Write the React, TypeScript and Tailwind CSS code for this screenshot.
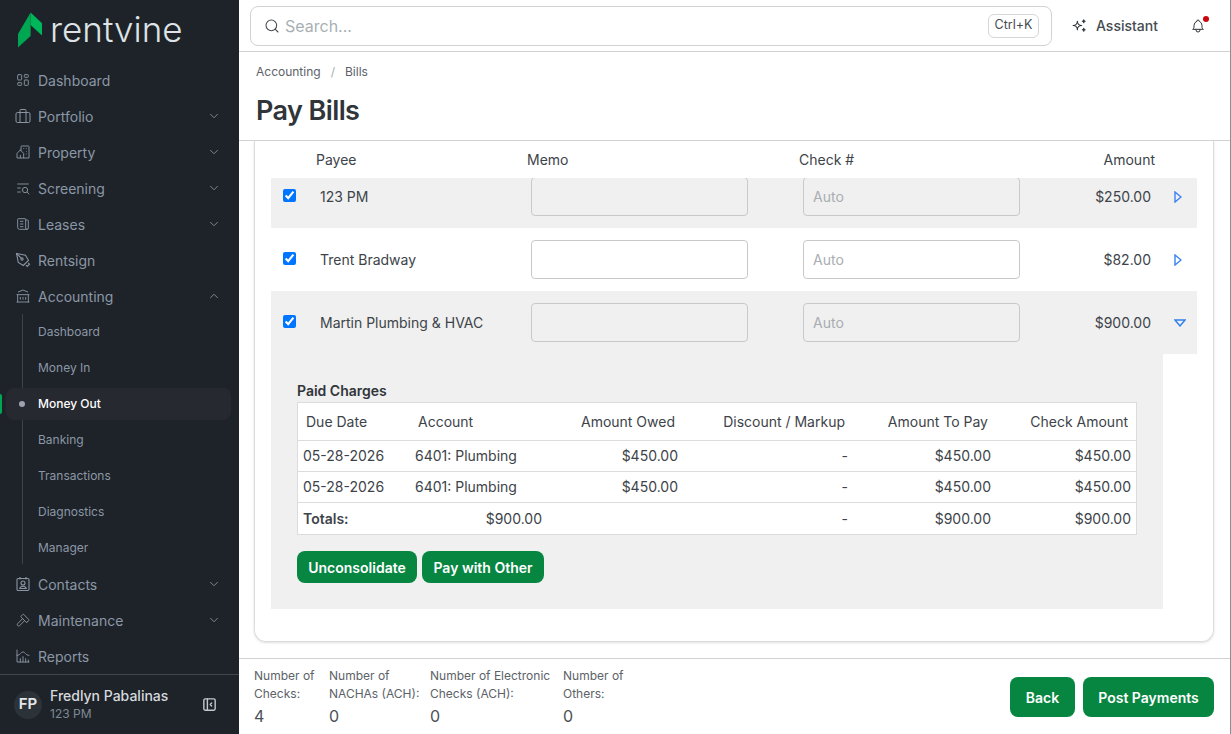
import React from "react";
import { ChevronDown, ChevronUp, Search } from "lucide-react";
import {
  TbLayoutDashboard, TbBuildingCommunity, TbListSearch, TbNews, TbBuildingBank,
  TbHammer, TbChartHistogram, TbLayoutSidebarLeftCollapse, TbSparkles, TbBell, TbPencilCheck,
} from "react-icons/tb";

const iconClass = "w-4 h-4 shrink-0 text-[#8b95a1]";

function BriefcaseIcon() {
  return (
    <svg viewBox="0 0 16 16" fill="none" stroke="currentColor" strokeWidth="1" className={iconClass}>
      <rect x="1" y="4.5" width="14" height="10" rx="1.5" />
      <path d="M5 4.5V2.5a1 1 0 0 1 1-1h4a1 1 0 0 1 1 1v2M5 4.5v10M11 4.5v10" />
    </svg>
  );
}

function ContactIcon() {
  return (
    <svg viewBox="0 0 16 16" fill="none" stroke="currentColor" strokeWidth="1.1" className={iconClass}>
      <rect x="2" y="2.5" width="12" height="12" rx="1.2" />
      <path d="M5 1v2.5M11 1v2.5" />
      <circle cx="8" cy="7" r="2" />
      <path d="M4.8 12.5c.4-1.6 1.6-2.2 3.2-2.2s2.8.6 3.2 2.2z" />
    </svg>
  );
}

function PenIcon() {
  return (
    <svg viewBox="0 0 16 16" fill="none" stroke="currentColor" strokeWidth="1.1" className={iconClass}>
      <path d="M1.5 1.5l9 1.8 3 5-5.2 5.2-5-3z" />
      <path d="M11 13.2l1.2 1.3 2.3-2.3-1.3-1.2" />
      <circle cx="7" cy="7" r="1.1" />
      <path d="M1.5 1.5L6.2 6.2" />
    </svg>
  );
}

type NavItem = { label: string; icon: React.ReactNode; chevron?: boolean };

const topItems: NavItem[] = [
  { label: "Dashboard", icon: <TbLayoutDashboard className={iconClass} strokeWidth={1.4} /> },
  { label: "Portfolio", icon: <BriefcaseIcon />, chevron: true },
  { label: "Property", icon: <TbBuildingCommunity className={iconClass} strokeWidth={1.4} />, chevron: true },
  { label: "Screening", icon: <TbListSearch className={iconClass} strokeWidth={1.4} />, chevron: true },
  { label: "Leases", icon: <TbNews className={iconClass} strokeWidth={1.4} />, chevron: true },
  { label: "Rentsign", icon: <PenIcon /> },
];

const bottomItems: NavItem[] = [
  { label: "Contacts", icon: <ContactIcon />, chevron: true },
  { label: "Maintenance", icon: <TbHammer className={iconClass} strokeWidth={1.4} />, chevron: true },
  { label: "Reports", icon: <TbChartHistogram className={iconClass} strokeWidth={1.4} /> },
];

const subItems = ["Dashboard", "Money In", "Money Out", "Banking", "Transactions", "Diagnostics", "Manager"];

function NavRow({ item }: { item: NavItem }) {
  return (
    <div className="flex items-center h-9 pl-[15px] pr-[18px] shrink-0">
      {item.icon}
      <span className="ml-[7px] text-[14px] text-[#8b97a6]">{item.label}</span>
      {item.chevron && <ChevronDown className="ml-auto w-[14px] h-[14px] text-[#8b95a1]" strokeWidth={1.5} />}
    </div>
  );
}

function Sidebar() {
  return (
    <aside className="w-[239px] h-full shrink-0 bg-[#1e2329] flex flex-col">
      <div className="h-[62px] shrink-0 flex items-start pl-[18px] pt-[12px]">
        <svg viewBox="0 0 25 36" className="w-[25px] h-[36px] shrink-0">
          <path d="M0 22 L12.6 0.6 V24 L0 35.6 Z" fill="#00a651" />
          <path d="M12.6 0.6 L24 11.3 V23.6 L12.6 13 Z" fill="#00b65a" />
        </svg>
        <span className="ml-[7px] -mt-[2px] text-[35px] leading-[38px] font-light text-[#dfe3e6]">rentvine</span>
      </div>
      <nav className="flex-1 overflow-hidden flex flex-col">
        {topItems.map((i) => <NavRow key={i.label} item={i} />)}
        <div className="flex items-center h-9 pl-[15px] pr-[18px] shrink-0">
          <TbBuildingBank className={iconClass} strokeWidth={1.4} />
          <span className="ml-[7px] text-[14px] text-[#8b97a6]">Accounting</span>
          <ChevronUp className="ml-auto w-[14px] h-[14px] text-[#8b95a1]" strokeWidth={1.5} />
        </div>
        <div className="relative shrink-0">
          <div className="absolute left-[22px] top-0 bottom-[2px] w-px bg-[#3d4349]" />
          {subItems.map((s) => {
            const active = s === "Money Out";
            return (
              <div key={s} className="relative h-9 flex items-center pl-[38px]">
                {active && <div className="absolute left-0 top-[8px] w-[2px] h-5 rounded-r bg-[#00a651]" />}
                {active && <div className="absolute left-[6px] right-[8px] top-[2px] h-8 rounded-lg bg-[#26292f]" />}
                {active && <div className="absolute left-[19px] top-[15px] w-[6px] h-[6px] rounded-full bg-[#9ca3af]" />}
                <span className={"relative text-[12px] " + (active ? "text-white font-medium" : "text-[#8b97a6]")}>{s}</span>
              </div>
            );
          })}
        </div>
        {bottomItems.map((i) => <NavRow key={i.label} item={i} />)}
      </nav>
      <div className="h-[60px] shrink-0 border-t border-[#41464b] flex items-center pl-[14px] pr-[21px]">
        <div className="w-7 h-7 rounded-full bg-[#2c3338] flex items-center justify-center text-[15px] font-semibold text-[#e5e7eb]">FP</div>
        <div className="ml-2 flex-1 flex flex-col">
          <span className="text-[14px] leading-[18px] font-medium text-[#d5d9dd]">Fredlyn Pabalinas</span>
          <span className="text-[12px] leading-[18px] text-[#7f8a93]">123 PM</span>
        </div>
        <TbLayoutSidebarLeftCollapse className="w-[17px] h-[17px] text-[#c3c8cc]" />
      </div>
    </aside>
  );
}

function TopBar() {
  return (
    <header className="h-[52px] shrink-0 border-b border-[#d2d2d2] flex items-center pl-[11px] pr-[16px]">
      <div className="w-[802px] h-10 border border-[#d2d2d2] rounded-lg flex items-center pl-[13px] pr-3">
        <Search className="w-[16px] h-[16px] text-[#454b50]" strokeWidth={1.6} />
        <span className="ml-[5px] text-[16px] text-[#a9b0b5]">Search...</span>
        <span className="ml-auto h-6 w-[51px] border border-[#d6d6d6] rounded-md flex items-center justify-center text-[12.5px] text-[#454b50]">Ctrl+K</span>
      </div>
      <TbSparkles className="ml-[19px] w-[17px] h-[17px] text-[#30353a]" strokeWidth={1.6} />
      <span className="ml-2 text-[14px] font-medium text-[#454b50]">Assistant</span>
      <div className="relative ml-auto mr-[8px]">
        <TbBell className="w-4 h-4 text-[#30353a]" strokeWidth={1.5} />
        <div className="absolute -right-[3px] -top-[2px] w-[6px] h-[6px] rounded-full bg-[#c8060c]" />
      </div>
    </header>
  );
}

function Triangle({ down }: { down?: boolean }) {
  return down ? (
    <svg viewBox="0 0 12 8" className="w-3 h-2"><path d="M1 1 H11 L6 7 Z" fill="none" stroke="#2f80ed" strokeWidth="1.4" /></svg>
  ) : (
    <svg viewBox="0 0 8 12" className="w-2 h-3"><path d="M1 1 V11 L7 6 Z" fill="none" stroke="#3b82f6" strokeWidth="1.4" /></svg>
  );
}

function PaymentRow({ name, amount, shaded, down, cut }: { name: string; amount: string; shaded?: boolean; down?: boolean; cut?: boolean }) {
  const bg = shaded ? "bg-[#f0f0f0]" : "bg-white";
  const row = (
    <div className={"flex items-start h-[63px] shrink-0 w-full pt-3 " + bg}>
      <div className="w-[49px] shrink-0 pl-3 pt-3 flex"><input type="checkbox" defaultChecked readOnly className="w-[13px] h-[13px]" /></div>
      <div className="w-[211px] shrink-0 h-[39px] flex items-center text-[14px] text-[#3d4349]">{name}</div>
      <div className={"w-[217px] h-[39px] shrink-0 rounded border border-[#c9c9c9] " + bg} />
      <div className={"ml-[55px] w-[217px] h-[39px] shrink-0 rounded border border-[#c9c9c9] flex items-center pl-[9px] text-[14px] text-[#a8adb1] " + bg}>Auto</div>
      <div className="w-[131px] shrink-0 h-[39px] flex items-center justify-end text-[14px] text-[#3d4349]">{amount}</div>
      <div className="ml-[23px] h-[39px] flex items-center"><Triangle down={down} /></div>
    </div>
  );
  return cut ? <div className="h-[50px] overflow-hidden flex items-end">{row}</div> : row;
}

const cell = "px-[5px] text-[14px] text-[#3d4349] font-normal";
const head = "px-[8px] text-[14px] text-[#3d4349] font-normal";

function Charges() {
  return (
    <div className="w-[892px] bg-[#f0f0f0] px-[26px] pt-[27px] pb-[26px]">
      <div className="text-[14px] leading-[20px] font-semibold text-[#30353a] mb-px">Paid Charges</div>
      <div className="border border-[#dcdcdc] bg-white">
        <table className="w-full table-fixed border-collapse">
          <colgroup>
            <col className="w-[112px]" />
            <col className="w-[137px]" />
            <col className="w-[136px]" />
            <col className="w-[170px]" />
            <col className="w-[143px]" />
            <col className="w-[140px]" />
          </colgroup>
          <thead>
            <tr className="h-[37px] border-b border-[#dcdcdc]">
              <th className={head + " text-left"}>Due Date</th>
              <th className={head + " text-left"}>Account</th>
              <th className={head + " text-right"}>Amount Owed</th>
              <th className={head + " text-right"}>Discount / Markup</th>
              <th className={head + " text-right"}>Amount To Pay</th>
              <th className={head + " text-right"}>Check Amount</th>
            </tr>
          </thead>
          <tbody>
            {[0, 1].map((i) => (
              <tr key={i} className="h-[31px] border-b border-[#dcdcdc]">
                <td className={cell}>05-28-2026</td>
                <td className={cell}>6401: Plumbing</td>
                <td className={cell + " text-right"}>$450.00</td>
                <td className={cell + " text-right"}>-</td>
                <td className={cell + " text-right"}>$450.00</td>
                <td className={cell + " text-right"}>$450.00</td>
              </tr>
            ))}
            <tr className="h-[32px]">
              <td className={cell + " font-semibold"}>Totals:</td>
              <td className={cell + " text-right"}>$900.00</td>
              <td className={cell}></td>
              <td className={cell + " text-right"}>-</td>
              <td className={cell + " text-right"}>$900.00</td>
              <td className={cell + " text-right"}>$900.00</td>
            </tr>
          </tbody>
        </table>
      </div>
      <div className="mt-4 flex gap-[5px]">
        <button className="h-8 w-[120px] rounded-lg bg-[#068641] text-white text-[14px] font-semibold">Unconsolidate</button>
        <button className="h-8 w-[122px] rounded-lg bg-[#068641] text-white text-[14px] font-semibold">Pay with Other</button>
      </div>
    </div>
  );
}

function Stat({ label, value, width }: { label: React.ReactNode; value: string; width: string }) {
  return (
    <div className={"flex flex-col shrink-0 " + width}>
      <span className="text-[12px] leading-[18px] text-[#5c6268]">{label}</span>
      <span className="text-[16px] leading-[24px] text-[#4a5056] mt-[1px]">{value}</span>
    </div>
  );
}

export default function App() {
  return (
    <div className="w-[1231px] h-[734px] flex overflow-hidden bg-white font-['Inter',sans-serif]">
      <Sidebar />
      <main className="flex-1 min-w-0 h-full flex flex-col border-r border-[#8c8c8c]">
        <TopBar />
        <div className="h-[89px] shrink-0 border-b border-[#d2d2d2] pl-[17px]">
          <div className="pt-[12px] text-[12px] leading-[16px] text-[#5c6268] flex">
            <span>Accounting</span>
            <span className="mx-[10px] text-[#a8adb1]">/</span>
            <span>Bills</span>
          </div>
          <h1 className="mt-[13px] text-[27px] leading-[36px] font-semibold tracking-[-0.6px] text-[#30353a]">Pay Bills</h1>
        </div>
        <div className="flex-1 min-h-0 pl-[15px] pr-[16px] overflow-hidden">
          <div className="border-x border-b border-[#dcdcdc] rounded-b-xl shadow-sm px-4 pb-8">
            <div className="flex items-center h-[37px] text-[14px] text-[#3d4349]">
              <span className="ml-[45px] w-[211px]">Payee</span>
              <span className="w-[272px]">Memo</span>
              <span>Check #</span>
              <span className="ml-auto mr-[42px]">Amount</span>
            </div>
            <PaymentRow name="123 PM" amount="$250.00" shaded cut />
            <PaymentRow name="Trent Bradway" amount="$82.00" />
            <PaymentRow name="Martin Plumbing & HVAC" amount="$900.00" shaded down />
            <Charges />
          </div>
        </div>
        <footer className="h-[76px] shrink-0 border-t border-[#d2d2d2] flex items-start pl-[15px] pr-[16px] pt-[8px]">
          <Stat width="w-[75px]" label={<>Number of<br />Checks:</>} value="4" />
          <Stat width="w-[101px]" label={<>Number of<br />NACHAs (ACH):</>} value="0" />
          <Stat width="w-[133px]" label={<>Number of Electronic<br />Checks (ACH):</>} value="0" />
          <Stat width="w-[90px]" label={<>Number of<br />Others:</>} value="0" />
          <div className="ml-auto mt-[10px] flex gap-2">
            <button className="h-10 w-[65px] rounded-lg bg-[#068641] text-white text-[14px] font-semibold">Back</button>
            <button className="h-10 w-[131px] rounded-lg bg-[#068641] text-white text-[14px] font-semibold">Post Payments</button>
          </div>
        </footer>
      </main>
    </div>
  );
}
